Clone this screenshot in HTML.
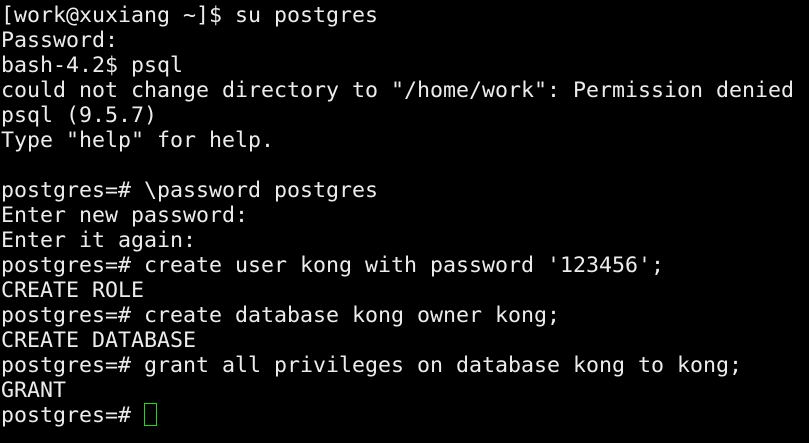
<!DOCTYPE html>
<html><head><meta charset="utf-8"><style>
html,body{margin:0;padding:0;background:#000;width:809px;height:443px;overflow:hidden}
pre{margin:0;position:absolute;left:1px;top:3px;color:#ececec;font-family:"DejaVu Sans Mono","Liberation Mono",monospace;font-size:21.6px;line-height:25px;white-space:pre}
.cur{position:absolute;left:144px;top:403px;width:11px;height:21px;border:1px solid #1ed71e}
</style></head><body>
<pre>[work@xuxiang ~]$ su postgres
Password:
bash-4.2$ psql
could not change directory to "/home/work": Permission denied
psql (9.5.7)
Type "help" for help.

postgres=# \password postgres
Enter new password:
Enter it again:
postgres=# create user kong with password '123456';
CREATE ROLE
postgres=# create database kong owner kong;
CREATE DATABASE
postgres=# grant all privileges on database kong to kong;
GRANT
postgres=# </pre>
<div class="cur"></div>
</body></html>
